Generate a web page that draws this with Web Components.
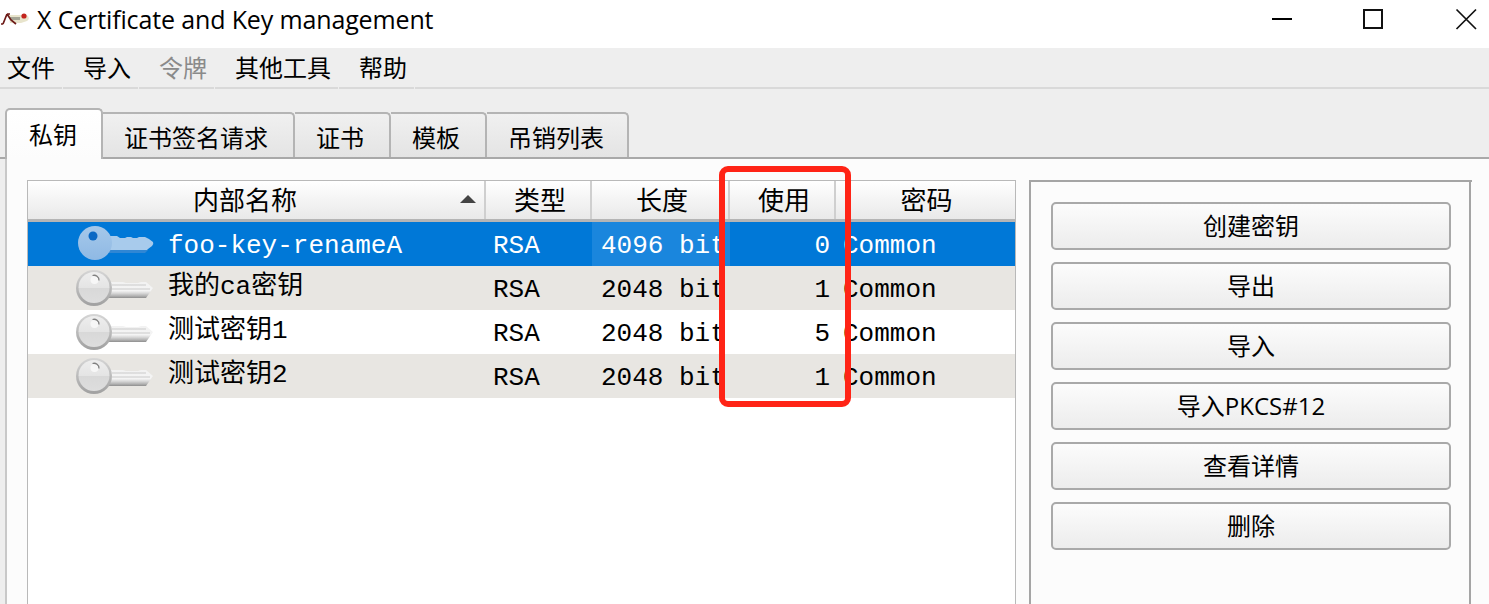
<!DOCTYPE html>
<html lang="zh"><head><meta charset="utf-8"><title>X Certificate and Key management</title>
<style>
html,body{margin:0;padding:0;background:#fcfcfc}
body{font-family:"Noto Sans CJK SC","Noto Sans",sans-serif;font-size:24px;color:#000}
</style></head><body>
<xca-app>
  <xca-titlebar slot="top">X Certificate and Key management</xca-titlebar>
  <xca-menubar slot="top">
    <xca-menu-item>文件</xca-menu-item><xca-menu-item>导入</xca-menu-item><xca-menu-item disabled>令牌</xca-menu-item><xca-menu-item>其他工具</xca-menu-item><xca-menu-item>帮助</xca-menu-item>
  </xca-menubar>
  <xca-tabbar slot="top">
    <xca-tab active>私钥</xca-tab><xca-tab>证书签名请求</xca-tab><xca-tab>证书</xca-tab><xca-tab>模板</xca-tab><xca-tab>吊销列表</xca-tab>
  </xca-tabbar>
  <xca-key-table>
    <xca-key-row selected name="foo-key-renameA" type="RSA" len="4096 bit" use="0" pw="Common"></xca-key-row>
    <xca-key-row alt name="我的ca密钥" type="RSA" len="2048 bit" use="1" pw="Common"></xca-key-row>
    <xca-key-row name="测试密钥1" type="RSA" len="2048 bit" use="5" pw="Common"></xca-key-row>
    <xca-key-row alt name="测试密钥2" type="RSA" len="2048 bit" use="1" pw="Common"></xca-key-row>
  </xca-key-table>
  <xca-side>
    <xca-button>创建密钥</xca-button><xca-button>导出</xca-button><xca-button>导入</xca-button><xca-button>导入PKCS#12</xca-button><xca-button>查看详情</xca-button><xca-button>删除</xca-button>
  </xca-side>
  <xca-callout slot="over"></xca-callout>
</xca-app>
<script>
function def(name, html, init){
  customElements.define(name, class extends HTMLElement{
    constructor(){super();this.attachShadow({mode:'open'}).innerHTML=html;}
    connectedCallback(){ if(init) init(this); }
  });
}
const CJK='"Noto Sans CJK SC","Noto Sans",sans-serif';

def('xca-app',`<style>
:host{display:block;position:relative;width:1489px;height:604px;overflow:hidden;background:#eee}
.panel{display:flex;gap:13px;height:445px;box-sizing:border-box;margin-left:5px;border-left:2px solid #c8c8c8;background:#fcfcfc;padding:21px 0 0 20px}
</style><slot name="top"></slot><div class="panel"><slot></slot></div><slot name="over"></slot>`);

def('xca-titlebar',`<style>
:host{display:flex;align-items:flex-start;height:48px;background:#fff;box-sizing:border-box}
.app{width:30px;height:14px;margin:12px 7px 0 0;flex:none;display:block}
.t{font:25px/38px "Open Sans","Noto Sans",sans-serif;flex:1;white-space:nowrap;letter-spacing:-.14px}
svg.c{display:block;width:228px;height:48px;flex:none}
</style>
<svg class="app" viewBox="0 0 30 14"><path d="M9 3h12l4-1 3 2q2 3-1 5l-6 2H10z" fill="#e8e4cc"/><path d="M10 5h10v3H10z" fill="#a5a595"/><circle cx="24" cy="4" r="2.600" fill="#c3241e"/><path d="M7 2 3 12M3 12H1M7 2l4 6 5 4M7 2h3" stroke="#6d1a17" stroke-width="1.700" fill="none"/></svg>
<div class="t"><slot></slot></div>
<svg class="c" viewBox="0 0 228 48"><path d="M11 19h20" stroke="#000" stroke-width="2"/><rect x="103" y="10" width="18" height="18" fill="none" stroke="#111" stroke-width="2"/><path d="M195.500 9.500 215 29M215 9.500 195.500 29" stroke="#111" stroke-width="1.700" fill="none"/></svg>`);

def('xca-menubar',`<style>
:host{display:flex;height:41px;background:#eee;box-sizing:border-box}
.f{flex:1;border-bottom:2px solid #d9d9d9}
::slotted(xca-menu-item:first-child){padding-left:7px;padding-right:7px}
</style><slot></slot><div class="f"></div>`);

def('xca-menu-item',`<style>
:host{display:block;padding:0 7px 0 20px;margin-right:1px;height:39px;border-bottom:2px solid #d9d9d9;font:24px/37px ${CJK};white-space:nowrap}
:host([disabled]){color:#8a8a8a}
</style><slot></slot>`);

def('xca-tabbar',`<style>
:host{display:flex;align-items:flex-end;height:70px;box-sizing:border-box;padding-left:5px;border-bottom:2px solid #a9a9a9;background:#eee}
</style><slot></slot>`);

def('xca-tab',`<style>
:host{display:block;box-sizing:border-box;height:45px;padding:0 25px 0 21px;font:24px/46px ${CJK};white-space:nowrap;border:2px solid #b4b4b4;border-bottom:0;border-left-width:0;border-radius:0 5px 0 0;background:linear-gradient(#f0f0f0,#e4e4e4)}
:host(:last-child){padding-right:23px}
:host([active]){height:51px;margin-bottom:-2px;background:linear-gradient(#fff,#fcfcfc);border-left-width:2px;border-radius:5px 5px 0 0;line-height:48px;padding:0 24px 0 22px;position:relative;z-index:1}
</style><slot></slot>`);

def('xca-key-table',`<style>
:host{display:block;width:989px;box-sizing:border-box;border:1px solid #b9b9b9;border-bottom:0;background:#fff;height:424px}
.h{display:grid;grid-template-columns:458px 106px 138px 106px 1fr;height:41px;box-sizing:border-box;border-bottom:3px solid #b5b5b5;background:linear-gradient(#fff,#e9e9e9)}
.h div{position:relative;text-align:center;font:26px/36px ${CJK};border-right:2px solid #cfcfcf;box-sizing:border-box;padding-left:4px}
.h div:first-child{padding:0 22px 0 0}
.h div:last-child{border-right:0;padding-left:2px}
.arrow{position:absolute;right:8px;top:14px;width:0;height:0;border:8px solid transparent;border-top:0;border-bottom:8px solid #444}
</style>
<div class="h"><div>内部名称<span class="arrow"></span></div><div>类型</div><div>长度</div><div>使用</div><div>密码</div></div>
<slot></slot>`);

def('xca-key-row',`<style>
:host{display:grid;grid-template-columns:458px 106px 138px 106px 1fr;height:44px;background:#fff;color:#000;font:26px/48px "Liberation Mono",${CJK}}
:host([alt]){background:#e8e6e2}
:host([selected]){background:#0078d7;color:#fff}
.c{white-space:nowrap;overflow:hidden;padding-left:7px;box-sizing:border-box;position:relative;height:44px}
.name{padding-left:140px;display:block}
.name span{position:relative}
:host(:not([selected])) .name span{top:-3px}
.num{text-align:right;padding:0 6px 0 0}
:host([selected]) .cur{background:#1a86dd}
xca-key-icon{position:absolute;left:47px;top:3px}
</style>
<div class="c name"><xca-key-icon></xca-key-icon><span id="n"></span></div><div class="c" id="t"></div><div class="c cur" id="l" style="padding-left:9px"></div><div class="c num" id="u"></div><div class="c" id="p" style="padding-left:7px"></div>`,
el=>{const r=el.shadowRoot;
 r.getElementById('n').textContent=el.getAttribute('name');
 r.getElementById('t').textContent=el.getAttribute('type');
 r.getElementById('l').textContent=el.getAttribute('len');
 r.getElementById('u').textContent=el.getAttribute('use');
 r.getElementById('p').textContent=el.getAttribute('pw');
 if(el.hasAttribute('selected')) r.querySelector('xca-key-icon').setAttribute('selected','');
});

def('xca-key-icon',`<style>
:host{display:block;width:80px;height:38px}
svg{display:block;filter:blur(.5px)}
.b{display:none}
:host([selected]) .g{display:none}
:host([selected]) .b{display:block}
</style>
<svg class="g" width="80" height="38" viewBox="0 0 80 38">
<defs><linearGradient id="gh" x1="0" y1="0" x2="0" y2="1"><stop offset="0" stop-color="#eeeeee"/><stop offset=".5" stop-color="#e4e4e4"/><stop offset=".52" stop-color="#d8d8d8"/><stop offset="1" stop-color="#dedede"/></linearGradient>
<linearGradient id="gr" x1="0" y1="0" x2="0" y2="1"><stop offset="0" stop-color="#d6d6d6"/><stop offset="1" stop-color="#a0a0a0"/></linearGradient>
<linearGradient id="gs" x1="0" y1="0" x2="0" y2="1"><stop offset="0" stop-color="#f2f2f2"/><stop offset=".55" stop-color="#f4f4f4"/><stop offset=".72" stop-color="#d4d4d4"/><stop offset=".88" stop-color="#b0b0b0"/><stop offset="1" stop-color="#8e8e8e"/></linearGradient></defs>
<path d="M34 13h14l3 1h12l3-1h5l7 6-7 10H34z" fill="url(#gs)"/>
<path d="M37 16h34M37 20h38" stroke="#c6c6c6" stroke-width="1" opacity=".9"/>
<circle cx="19" cy="19" r="18" fill="url(#gr)"/>
<circle cx="19" cy="18.500" r="15.500" fill="url(#gh)"/>
<circle cx="19.500" cy="11" r="4" fill="#f7f7f7"/><path d="M17.500 6.500a5 5 0 0 1 6.500 5" stroke="#808080" stroke-width="1.300" fill="none"/>
</svg>
<svg class="b" width="80" height="38" viewBox="0 0 80 38">
<defs><linearGradient id="bh" x1="0" y1="0" x2="0" y2="1"><stop offset="0" stop-color="#a5c8ea"/><stop offset="1" stop-color="#8fb9e4"/></linearGradient></defs>
<path d="M34 11h8l3 2h5l2-1h4l2 1h4l2-1h6l4 2 4 3q1 2-1 4l-4 3-2 2H34z" fill="#a8cbec"/>
<path d="M34 25h39l-3 3H34z" fill="#2f86d4"/>
<circle cx="20" cy="18" r="17" fill="url(#bh)"/>
<circle cx="18" cy="11" r="4.500" fill="#0a68c4"/>
</svg>`);

def('xca-side',`<style>
:host{display:flex;flex-direction:column;gap:12px;box-sizing:border-box;width:443px;height:424px;padding:20px 0 0 20px;border-top:2px solid #a5a5a5;border-left:2px solid #a5a5a5;background:#fcfcfc;position:relative}
.r{position:absolute;right:1px;top:0;bottom:0;width:2px;background:#a5a5a5}
</style><div class="r"></div><slot></slot>`);

def('xca-button',`<style>
:host{display:block;box-sizing:border-box;width:400px;height:48px;border:2px solid #a9a9a9;border-radius:5px;background:linear-gradient(#fcfcfc,#ececec);text-align:center;font:24px/44px "Open Sans",${CJK};white-space:nowrap}
</style><slot></slot>`);

def('xca-callout',`<style>
:host{position:absolute;left:719px;top:166px;width:132px;height:241px;box-sizing:border-box;border:6px solid #ff2416;border-radius:9px;pointer-events:none}
</style>`);
</script>
</body></html>
